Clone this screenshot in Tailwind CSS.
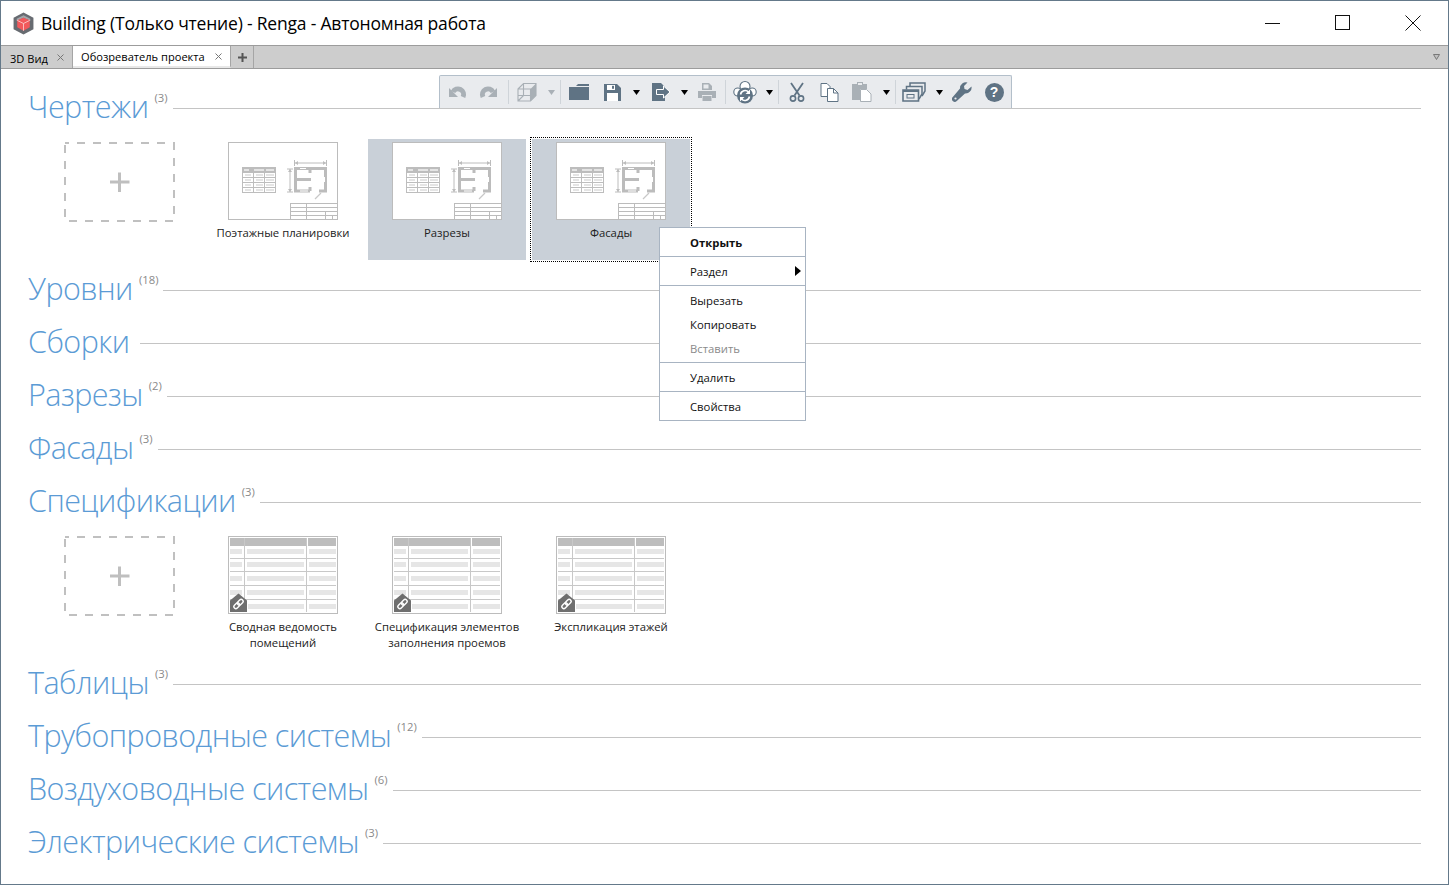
<!DOCTYPE html>
<html lang="ru"><head><meta charset="utf-8"><title>Renga</title>
<script src="https://cdn.jsdelivr.net/npm/@tailwindcss/browser@4"></script></head>
<body class="bg-white overflow-hidden font-['Open_Sans','Noto_Sans',sans-serif]">
<svg class="hidden">
<symbol id="drawing" viewBox="0 0 110 78">
<rect x="0.5" y="0.5" width="109" height="77" fill="#fff" stroke="#bcbcbc"/>
<rect x="14" y="25" width="34" height="26" fill="#bdbdbd"/>
<g fill="#fff"><rect x="15" y="31" width="10" height="4"/><rect x="26" y="31" width="10" height="4"/><rect x="37" y="31" width="10" height="4"/><rect x="15" y="36" width="10" height="4"/><rect x="26" y="36" width="10" height="4"/><rect x="37" y="36" width="10" height="4"/><rect x="15" y="41" width="10" height="4"/><rect x="26" y="41" width="10" height="4"/><rect x="37" y="41" width="10" height="4"/><rect x="15" y="46" width="10" height="4"/><rect x="26" y="46" width="10" height="4"/><rect x="37" y="46" width="10" height="4"/></g>
<g fill="#e4e4e4"><rect x="17" y="32" width="6" height="2"/><rect x="28" y="32" width="7" height="2"/><rect x="38" y="32" width="8" height="2"/><rect x="17" y="37" width="6" height="2"/><rect x="28" y="37" width="7" height="2"/><rect x="38" y="37" width="8" height="2"/><rect x="17" y="42" width="6" height="2"/><rect x="28" y="42" width="7" height="2"/><rect x="38" y="42" width="8" height="2"/><rect x="17" y="47" width="6" height="2"/><rect x="28" y="47" width="7" height="2"/><rect x="38" y="47" width="8" height="2"/></g>
<g fill="#e4e4e4"><rect x="16" y="27" width="5" height="2"/><rect x="26" y="27" width="10" height="2"/><rect x="38" y="27" width="8" height="2"/></g>
<path d="M82 49H67.500V26.500H97.500V49H91M67.500 37.500H83M82 26.500V31M82 45V49" fill="none" stroke="#bcbcbc" stroke-width="3"/>
<path d="M72 26.500H78M96.500 35V40M72 49H80" stroke="#fff" stroke-width="1" fill="none"/>
<path d="M87 57L93 51" stroke="#c8c8c8" stroke-width="1.200" fill="none"/>
<path d="M66.500 21H98.500M66.500 18V24M98.500 18V24M59 27H65M59 50H65M62 27V50" stroke="#bcbcbc" stroke-width="1" fill="none"/>
<path d="M67 21l3-2v4zM98 21l-3-2v4zM62 27l-2 3h4zM62 50l-2-3h4z" fill="#bcbcbc"/>
<path d="M62 61.500H110M62 65.500H110M62 69.500H110M62 73.500H110M62.500 61V78M78.500 61V78M97.500 69.500V78M104.500 73.500V78" stroke="#bcbcbc" stroke-width="1" fill="none"/>
</symbol>
<symbol id="schedule" viewBox="0 0 110 78">
<rect x="0.5" y="0.5" width="109" height="77" fill="#fff" stroke="#bcbcbc"/>
<g fill="#bdbdbd"><rect x="2" y="2" width="14" height="8"/><rect x="17" y="2" width="61" height="8"/><rect x="80" y="2" width="28" height="8"/></g>
<g fill="#e6e6e6"><rect x="2" y="13" width="12" height="5"/><rect x="19" y="13" width="57" height="5"/><rect x="81" y="13" width="27" height="5"/><rect x="2" y="26" width="12" height="5"/><rect x="19" y="26" width="57" height="5"/><rect x="81" y="26" width="27" height="5"/><rect x="2" y="40" width="12" height="5"/><rect x="19" y="40" width="57" height="5"/><rect x="81" y="40" width="27" height="5"/><rect x="2" y="54" width="12" height="5"/><rect x="19" y="54" width="57" height="5"/><rect x="81" y="54" width="27" height="5"/><rect x="20" y="68" width="56" height="5"/><rect x="81" y="68" width="27" height="5"/></g>
<path d="M2 22.500H108M2 35.500H108M2 49.500H108M2 63.500H108M16.500 2V76M78.500 2V76" stroke="#c8c8c8" stroke-width="1" fill="none"/>
<path d="M2 64.500L10.500 57.500L19 64.500V76H2Z" fill="#6f6f6f"/>
<rect x="9" y="64.200" width="6.500" height="4" rx="2" transform="rotate(-45 12.250 66.200)" fill="none" stroke="#fff" stroke-width="1.400"/>
<rect x="5.500" y="67.800" width="6.500" height="4" rx="2" transform="rotate(-45 8.750 69.800)" fill="none" stroke="#fff" stroke-width="1.400"/>
</symbol>
<symbol id="plus" viewBox="0 0 111 80">
<rect x="1" y="1" width="109" height="78" fill="#fff" stroke="#c0c0c0" stroke-width="2" stroke-dasharray="8 8" stroke-dashoffset="4"/>
<path d="M46 40H65.500M55.500 30.500V50" stroke="#bfbfbf" stroke-width="3" fill="none"/>
</symbol>
</svg>
<div class="w-[1449px] h-[885px] border-x border-y border-[#64798a] relative flex flex-col">
  <header class="h-[44px] flex items-center shrink-0">
    <svg class="w-[23px] h-[23px] ml-[11px]" viewBox="0 0 22 22"><path d="M11 0.500L20.500 5.500V16.500L11 21.500L1.500 16.500V5.500Z" fill="#676b71"/><path d="M11 3L17.500 6.500V8.500L11 5.500L4.500 8.500V6.500Z" fill="#a3a6aa"/><path d="M5 8L11 5.500L17 8V14.500L11 18L5 14.500Z" fill="#f2595c"/><path d="M11 11V18M5 8L11 11L17 8" stroke="#fbd0d0" stroke-width=".8" fill="none"/></svg>
    <h1 class="ml-[6px] pt-[2px] text-[17.5px] leading-none text-black tracking-[-0.2px]">Building (Только чтение) - Renga - Автономная работа</h1>
    <div class="ml-auto flex items-center">
      <svg class="w-[16px] h-[16px] mr-[54px]" viewBox="0 0 16 16"><path d="M0 8.500H15" stroke="#111" fill="none"/></svg>
      <svg class="w-[16px] h-[16px] mr-[54px]" viewBox="0 0 16 16"><rect x=".5" y=".5" width="14" height="14" stroke="#111" fill="none"/></svg>
      <svg class="w-[16px] h-[16px] mr-[27px]" viewBox="0 0 16 16"><path d="M.5.5L15.500 15.500M15.500.5L.5 15.500" stroke="#111" fill="none"/></svg>
    </div>
  </header>
  <nav class="h-[24px] shrink-0 bg-[#cdcdcd] border-y border-[#9c9c9c] flex text-[11.1px] text-black">
    <div class="w-[72px] flex items-center pl-[9px] pt-[4px] border-r border-[#a5a5a5]"><span>3D Вид</span><svg class="ml-auto mr-[8px] w-[7px] h-[7px] -mt-[3px]" viewBox="0 0 7 7"><path d="M.5.5L6.500 6.500M6.500.5L.5 6.500" stroke="#777" fill="none"/></svg></div>
    <div class="w-[158px] bg-white flex items-center pl-[8px] pt-[3px] border-r border-[#a5a5a5] border-b-2 border-b-[#e8e8e8]"><span class="whitespace-nowrap">Обозреватель проекта</span><svg class="ml-auto mr-[8px] w-[7px] h-[7px] -mt-[2px]" viewBox="0 0 7 7"><path d="M.5.5L6.500 6.500M6.500.5L.5 6.500" stroke="#777" fill="none"/></svg></div>
    <div class="w-[23px] flex items-center justify-center border-r border-[#a5a5a5]"><svg class="w-[9px] h-[9px]" viewBox="0 0 9 9"><path d="M4.500 0V9M0 4.500H9" stroke="#555" stroke-width="2"/></svg></div>
    <svg class="ml-auto mr-[8px] self-center w-[7px] h-[6px]" viewBox="0 0 7 6"><path d="M.5.500H6.500L3.500 5.500Z" fill="#c0c0c0" stroke="#777"/></svg>
  </nav>
  <div class="absolute left-[438px] top-[74px] w-[573px] h-[33px] bg-[#e9ebee] border border-b-0 border-[#b3bfca] rounded-t-[2px] flex items-center pl-[1px]">
    <div class="w-8 flex justify-center"><svg class="w-[20px] h-[20px]" viewBox="0 0 20 20"><path d="M16 15A5.500 5.500 0 0 0 6 10" fill="none" stroke="#a9b0b6" stroke-width="5"/><path d="M2 6V15H11Z" fill="#a9b0b6"/></svg></div>
    <div class="w-8 flex justify-center"><svg class="w-[20px] h-[20px]" viewBox="0 0 20 20"><path d="M4 15A5.500 5.500 0 0 1 14 10" fill="none" stroke="#a9b0b6" stroke-width="5"/><path d="M18 6V15H9Z" fill="#a9b0b6"/></svg></div>
    <div class="w-px h-[24px] bg-[#cfd4d9] ml-[3px]"></div>
    <div class="w-9 flex justify-center"><svg class="w-[22px] h-[22px]" viewBox="0 0 22 22"><path d="M14.500 8L20 2.500V14.500L14.500 20Z" fill="#a9b0b6"/><path d="M2 8L7.500 2.500H20V14.500L14.500 20H2ZM2 8H14.500V20M7.500 2.500V14.500H2M7.500 14.500L2 20M7.500 14.500H20" fill="none" stroke="#a9b0b6" stroke-width="1.100"/></svg></div>
    <div class="w-[12px] flex justify-center"><svg class="w-[7px] h-[5px]" viewBox="0 0 7 5"><path d="M0 0H7L3.500 5Z" fill="#a9b0b6"/></svg></div>
    <div class="w-px h-[24px] bg-[#cfd4d9] ml-[3px]"></div>
    <div class="w-9 flex justify-center"><svg class="w-[22px] h-[18px]" viewBox="0 0 22 18"><path d="M1 3H8L10 1H21V3H1ZM1 4H21V17H1Z" fill="#5f7384"/></svg></div>
    <div class="w-[30px] flex justify-center"><svg class="w-[17px] h-[17px]" viewBox="0 0 17 17"><path d="M0 0H13L17 4V17H0Z" fill="#5f7384"/><rect x="3" y="1" width="8" height="5" fill="#fff"/><rect x="8" y="1.800" width="2" height="3" fill="#5f7384"/><rect x="3" y="9" width="11" height="8" fill="#fff"/></svg></div>
    <div class="w-[18px] flex justify-center"><svg class="w-[7px] h-[5px]" viewBox="0 0 7 5"><path d="M0 0H7L3.500 5Z" fill="#000"/></svg></div>
    <div class="w-[34px] flex justify-center"><svg class="w-[20px] h-[18px]" viewBox="0 0 20 18"><path d="M0 0H9L13 4V18H0Z" fill="#5f7384"/><path d="M4.500 6.500H11.500V3L18 9L11.500 15V11.500H4.500Z" fill="#5f7384" stroke="#fff"/></svg></div>
    <div class="w-[10px] flex justify-center"><svg class="w-[7px] h-[5px]" viewBox="0 0 7 5"><path d="M0 0H7L3.500 5Z" fill="#000"/></svg></div>
    <div class="w-9 flex justify-center"><svg class="w-[18px] h-[18px]" viewBox="0 0 18 18"><path d="M4 0H11L14 3V7H4Z" fill="#a9b0b6"/><rect x="5.500" y="1.500" width="5" height="4" fill="#e9ebee"/><path d="M0 8H18V15H14V12H4V15H0Z" fill="#a9b0b6"/><rect x="4.500" y="13" width="9" height="5" fill="#a9b0b6"/></svg></div>
    <div class="w-px h-[24px] bg-[#cfd4d9]"></div>
    <div class="w-[38px] flex justify-center"><svg class="w-[24px] h-[24px]" viewBox="0 0 24 24"><circle cx="12" cy="6.500" r="5" fill="#fff" stroke="#5f7384" stroke-width="1.100"/><circle cx="4.800" cy="12" r="4" fill="#fff" stroke="#5f7384" stroke-width="1.100"/><circle cx="19.200" cy="12" r="4" fill="#fff" stroke="#5f7384" stroke-width="1.100"/><circle cx="12" cy="15.500" r="8" fill="#5f7384"/><path d="M7.500 14.500A4.700 4.700 0 0 1 15.500 12M16.500 16.500A4.700 4.700 0 0 1 8.500 19" fill="none" stroke="#fff" stroke-width="1.600"/><path d="M17 9.500V14H12.500ZM7 21.500V17H11.500Z" fill="#fff"/></svg></div>
    <div class="w-[10px] flex justify-center"><svg class="w-[7px] h-[5px]" viewBox="0 0 7 5"><path d="M0 0H7L3.500 5Z" fill="#000"/></svg></div>
    <div class="w-px h-[24px] bg-[#cfd4d9] ml-[4px]"></div>
    <div class="w-9 flex justify-center"><svg class="w-[16px] h-[20px]" viewBox="0 0 16 20"><path d="M2 1L10.500 13.500M14 1L5.500 13.500" stroke="#5f7384" stroke-width="1.800" fill="none"/><circle cx="4" cy="16.500" r="2.600" fill="none" stroke="#5f7384" stroke-width="1.600"/><circle cx="12" cy="16.500" r="2.600" fill="none" stroke="#5f7384" stroke-width="1.600"/></svg></div>
    <div class="w-7 flex justify-center"><svg class="w-[19px] h-[19px]" viewBox="0 0 19 19"><path d="M1 .500H7L10 3.500V13.500H1Z" fill="#fff" stroke="#5f7384"/><path d="M7.500 5.500H13.500L18 10V18.500H7.500Z" fill="#fff" stroke="#5f7384"/><path d="M13.500 5.500V10H18" fill="none" stroke="#5f7384"/></svg></div>
    <div class="w-[38px] flex justify-center"><svg class="w-[20px] h-[20px]" viewBox="0 0 20 20"><path d="M0 2H5V0H11V2H15V7H8V18H0Z" fill="#a9b0b6"/><rect x="6" y="1" width="4" height="2" fill="#e9ebee"/><path d="M8.500 7.500H14.500L19 12V19.500H8.500Z" fill="#fff" stroke="#a9b0b6"/></svg></div>
    <div class="w-[10px] flex justify-center"><svg class="w-[7px] h-[5px]" viewBox="0 0 7 5"><path d="M0 0H7L3.500 5Z" fill="#000"/></svg></div>
    <div class="w-px h-[24px] bg-[#cfd4d9] ml-[4px]"></div>
    <div class="w-9 flex justify-center"><svg class="w-[24px] h-[20px]" viewBox="0 0 24 20"><path d="M8 4V1H23V9L20 14" fill="none" stroke="#5f7384" stroke-width="1.500"/><path d="M4.500 7.500V4.500H20V12L17 17" fill="#e9ebee" stroke="#5f7384" stroke-width="1.500"/><path d="M1 8H16.500V19H1Z" fill="#e9ebee" stroke="#5f7384" stroke-width="1.600"/><path d="M1 8H16.500L17 10H1Z" fill="#5f7384"/><rect x="5" y="12.500" width="7" height="3.500" fill="none" stroke="#5f7384"/></svg></div>
    <div class="w-[14px] flex justify-center"><svg class="w-[7px] h-[5px]" viewBox="0 0 7 5"><path d="M0 0H7L3.500 5Z" fill="#000"/></svg></div>
    <div class="w-8 flex justify-center"><svg class="w-[20px] h-[20px]" viewBox="0 0 20 20"><path d="M19.500 4.500L15.500 8L12.500 7L12 4L15.500.500A6 6 0 0 0 8 6.500L.8 15A2.800 2.800 0 0 0 4.800 19L13 11.500A6 6 0 0 0 19.500 4.500Z" fill="#5f7384"/><circle cx="3.500" cy="16.500" r="1.100" fill="#e9ebee"/></svg></div>
    <div class="w-8 flex justify-center"><span class="w-[19px] h-[19px] rounded-full bg-[#5f7384] text-white font-bold text-[14px] leading-[19px] text-center font-['Liberation_Sans',sans-serif]">?</span></div>
  </div>
  <main class="flex-1 pt-[13px] pl-[27px] pr-[27px] min-h-0">
    <section>
      <div class="h-[53px] flex items-center"><h2 class="text-[30.5px] tracking-[-0.55px] leading-none font-light text-[#5b9bd5] relative -top-[2px] whitespace-nowrap">Чертежи</h2><sup class="self-start text-[11.3px] text-[#8a8a8a] mt-[10px] ml-[6px] static leading-none">(3)</sup><div class="flex-1 h-px bg-[#c4c4c4] ml-[5px]"></div></div>
      <div class="h-[129px] flex pl-[12px] pt-[4px] text-[#222] text-[11.3px] leading-[16px] text-center">
        <div class="w-[158px] mr-[6px] pt-[3px] pl-[1px] flex justify-center"><svg class="w-[111px] h-[80px]"><use href="#plus"/></svg></div>
        <div class="w-[158px] mr-[6px] h-[121px] pt-[3px] flex flex-col items-center"><svg class="w-[110px] h-[78px]"><use href="#drawing"/></svg><span class="mt-[5px] whitespace-nowrap">Поэтажные планировки</span></div>
        <div class="w-[158px] mr-[6px] h-[121px] pt-[3px] flex flex-col items-center bg-[#c9d0d8]"><svg class="w-[110px] h-[78px]"><use href="#drawing"/></svg><span class="mt-[5px]">Разрезы</span></div>
        <div class="w-[158px] h-[121px] pt-[3px] flex flex-col items-center bg-[#c9d0d8] outline-1 outline-dotted outline-black outline-offset-[1px]"><svg class="w-[110px] h-[78px]"><use href="#drawing"/></svg><span class="mt-[5px]">Фасады</span></div>
      </div>
    </section>
    <section class="h-[53px] flex items-center"><h2 class="text-[30.5px] tracking-[-0.55px] leading-none font-light text-[#5b9bd5] relative -top-[2px] whitespace-nowrap">Уровни</h2><sup class="self-start text-[11.3px] text-[#8a8a8a] mt-[10px] ml-[6px] static leading-none">(18)</sup><div class="flex-1 h-px bg-[#c4c4c4] ml-[5px]"></div></section>
    <section class="h-[53px] flex items-center"><h2 class="text-[30.5px] tracking-[-0.55px] leading-none font-light text-[#5b9bd5] relative -top-[2px] whitespace-nowrap">Сборки</h2><div class="flex-1 h-px bg-[#c4c4c4] ml-[11px]"></div></section>
    <section class="h-[53px] flex items-center"><h2 class="text-[30.5px] tracking-[-0.55px] leading-none font-light text-[#5b9bd5] relative -top-[2px] whitespace-nowrap">Разрезы</h2><sup class="self-start text-[11.3px] text-[#8a8a8a] mt-[10px] ml-[6px] static leading-none">(2)</sup><div class="flex-1 h-px bg-[#c4c4c4] ml-[5px]"></div></section>
    <section class="h-[53px] flex items-center"><h2 class="text-[30.5px] tracking-[-0.55px] leading-none font-light text-[#5b9bd5] relative -top-[2px] whitespace-nowrap">Фасады</h2><sup class="self-start text-[11.3px] text-[#8a8a8a] mt-[10px] ml-[6px] static leading-none">(3)</sup><div class="flex-1 h-px bg-[#c4c4c4] ml-[5px]"></div></section>
    <section>
      <div class="h-[53px] flex items-center"><h2 class="text-[30.5px] tracking-[-0.55px] leading-none font-light text-[#5b9bd5] relative -top-[2px] whitespace-nowrap">Спецификации</h2><sup class="self-start text-[11.3px] text-[#8a8a8a] mt-[10px] ml-[6px] static leading-none">(3)</sup><div class="flex-1 h-px bg-[#c4c4c4] ml-[5px]"></div></div>
      <div class="h-[129px] flex pl-[12px] pt-[7px] text-[#222] text-[11.3px] leading-[16px] text-center">
        <div class="w-[158px] mr-[6px] pl-[1px] flex justify-center"><svg class="w-[111px] h-[80px]"><use href="#plus"/></svg></div>
        <div class="w-[158px] mr-[6px] flex flex-col items-center"><svg class="w-[110px] h-[78px]"><use href="#schedule"/></svg><span class="mt-[5px]">Сводная ведомость<br>помещений</span></div>
        <div class="w-[158px] mr-[6px] flex flex-col items-center"><svg class="w-[110px] h-[78px]"><use href="#schedule"/></svg><span class="mt-[5px] whitespace-nowrap">Спецификация элементов<br>заполнения проемов</span></div>
        <div class="w-[158px] flex flex-col items-center"><svg class="w-[110px] h-[78px]"><use href="#schedule"/></svg><span class="mt-[5px] whitespace-nowrap">Экспликация этажей</span></div>
      </div>
    </section>
    <section class="h-[53px] flex items-center"><h2 class="text-[30.5px] tracking-[-0.55px] leading-none font-light text-[#5b9bd5] relative -top-[2px] whitespace-nowrap">Таблицы</h2><sup class="self-start text-[11.3px] text-[#8a8a8a] mt-[10px] ml-[6px] static leading-none">(3)</sup><div class="flex-1 h-px bg-[#c4c4c4] ml-[5px]"></div></section>
    <section class="h-[53px] flex items-center"><h2 class="text-[30.5px] tracking-[-0.55px] leading-none font-light text-[#5b9bd5] relative -top-[2px] whitespace-nowrap">Трубопроводные системы</h2><sup class="self-start text-[11.3px] text-[#8a8a8a] mt-[10px] ml-[6px] static leading-none">(12)</sup><div class="flex-1 h-px bg-[#c4c4c4] ml-[5px]"></div></section>
    <section class="h-[53px] flex items-center"><h2 class="text-[30.5px] tracking-[-0.55px] leading-none font-light text-[#5b9bd5] relative -top-[2px] whitespace-nowrap">Воздуховодные системы</h2><sup class="self-start text-[11.3px] text-[#8a8a8a] mt-[10px] ml-[6px] static leading-none">(6)</sup><div class="flex-1 h-px bg-[#c4c4c4] ml-[5px]"></div></section>
    <section class="h-[53px] flex items-center"><h2 class="text-[30.5px] tracking-[-0.55px] leading-none font-light text-[#5b9bd5] relative -top-[2px] whitespace-nowrap">Электрические системы</h2><sup class="self-start text-[11.3px] text-[#8a8a8a] mt-[10px] ml-[6px] static leading-none">(3)</sup><div class="flex-1 h-px bg-[#c4c4c4] ml-[5px]"></div></section>
  </main>
  <div class="absolute left-[658px] top-[226px] w-[147px] bg-white border border-[#a8b4c2] text-[11.3px] text-[#111] z-10">
    <div class="h-[29px] flex items-center pl-[30px] pt-[2px] font-bold border-b border-[#a8b4c2]">Открыть</div>
    <div class="h-[29px] flex items-center pl-[30px] pt-[2px] border-b border-[#a8b4c2] relative">Раздел<svg class="absolute right-[4px] top-[9px] w-[6px] h-[10px]" viewBox="0 0 6 10"><path d="M0 0L6 5L0 10Z" fill="#000"/></svg></div>
    <div class="border-b border-[#a8b4c2] pt-[3px] pb-[1px]"><div class="h-[24px] flex items-center pl-[30px]">Вырезать</div><div class="h-[24px] flex items-center pl-[30px]">Копировать</div><div class="h-[24px] flex items-center pl-[30px] text-[#8a8a8a]">Вставить</div></div>
    <div class="h-[29px] flex items-center pl-[30px] pt-[2px] border-b border-[#a8b4c2]">Удалить</div>
    <div class="h-[28px] flex items-center pl-[30px] pt-[2px]">Свойства</div>
  </div>
</div>
</body></html>
